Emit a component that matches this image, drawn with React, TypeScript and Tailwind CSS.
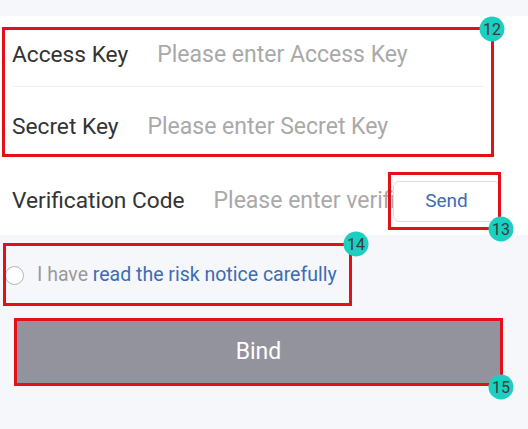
const FONT = "font-['Roboto','Liberation_Sans',sans-serif]";

function Badge({ n, x, y }: { n: number; x: number; y: number }) {
  return (
    <div
      className="absolute flex h-[25px] w-[25px] -translate-x-1/2 -translate-y-1/2 items-center justify-center rounded-full bg-[#1ccfc1] text-[16px] leading-none text-[#3a3a3a]"
      style={{ left: x, top: y }}
    >
      {n}
    </div>
  );
}

function Mark({ x, y, w, h }: { x: number; y: number; w: number; h: number }) {
  return (
    <div
      className="pointer-events-none absolute border-[3px] border-[#e3101a]"
      style={{ left: x, top: y, width: w, height: h }}
    />
  );
}

export default function App() {
  return (
    <div className={`relative h-[429px] w-[528px] overflow-hidden bg-[#f5f7fa] ${FONT}`}>
      <div className="pt-[16px]">
        <div className="bg-white">
          {/* access key */}
          <div className="relative flex h-[71px] items-center gap-[29px] pt-2 pl-3">
            <span className="text-[22.7px] text-[#333]">Access Key</span>
            <span className="text-[23px] text-[#a9a9a9]">Please enter Access Key</span>
            <div className="absolute bottom-0 left-3 right-[43px] h-px bg-[#f1f1f1]" />
          </div>
          {/* secret key */}
          <div className="flex h-[80px] items-center gap-[29px] pl-3">
            <span className="text-[22.7px] text-[#333]">Secret Key</span>
            <span className="text-[23px] text-[#a9a9a9]">Please enter Secret Key</span>
          </div>
          {/* verification */}
          <div className="flex h-[68px] items-center pl-3 pr-[28px]">
            <span className="mr-[29px] shrink-0 text-[22.7px] text-[#333]">Verification Code</span>
            <div className="min-w-0 flex-1 overflow-hidden whitespace-nowrap text-[23px] text-[#a9a9a9]">
              Please enter verification code
            </div>
            <button
              type="button"
              className="h-[41px] w-[107px] shrink-0 rounded-md border border-[#dcdcdc] bg-white text-[19px] text-[#3d6cb3]"
            >
              Send
            </button>
          </div>
        </div>

        {/* risk notice */}
        <div className="flex h-[80px] items-center gap-[13px] pl-[5px]">
          <span className="h-[19px] w-[19px] rounded-full border border-[#b5b5b5] bg-white" />
          <span className="text-[19.5px] text-[#9a9a9a]">
            I have <span className="text-[#3b6db5]">read the risk notice carefully</span>
          </span>
        </div>

        <button
          type="button"
          className="mt-[6px] ml-[17px] flex h-[62px] w-[483px] items-center justify-center bg-[#93939e] text-[23px] text-white"
        >
          Bind
        </button>
      </div>

      {/* annotations */}
      <Mark x={2} y={27} w={492} h={130} />
      <Mark x={388} y={172} w={113} h={58} />
      <Mark x={3} y={243} w={349} h={63} />
      <Mark x={14} y={318} w={489} h={68} />
      <Badge n={12} x={492} y={29} />
      <Badge n={13} x={501} y={229} />
      <Badge n={14} x={356} y={244} />
      <Badge n={15} x={501} y={387} />
    </div>
  );
}
